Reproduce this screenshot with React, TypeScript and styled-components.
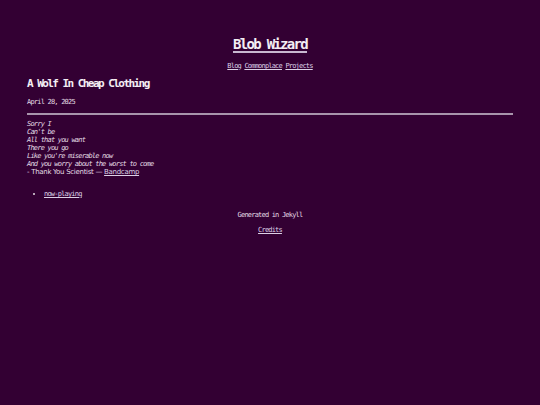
import React from "react";
import styled, { createGlobalStyle } from "styled-components";

const GlobalStyle = createGlobalStyle`
  html, body {
    margin: 0;
    padding: 0;
    background: #330033;
  }
  body {
    min-height: 405px;
    color: #e4dce4;
    font-family: "DejaVu Sans Mono", "Liberation Mono", monospace;
  }
`;

const lyrics = [
  "Sorry I",
  "Can't be",
  "All that you want",
  "There you go",
  "Like you're miserable now",
  "And you worry about the worst to come",
];

function App() {
  return (
    <>
      <GlobalStyle />
      <Page>
        <Header>
          <SiteTitle href="#">Blob Wizard</SiteTitle>
          <Nav>
            <SmallLink href="#">Blog</SmallLink> <SmallLink href="#">Commonplace</SmallLink>{" "}
            <SmallLink href="#">Projects</SmallLink>
          </Nav>
        </Header>

        <PostTitle>A Wolf In Cheap Clothing</PostTitle>
        <PostDate>April 28, 2025</PostDate>
        <Rule />

        <Quote>
          {lyrics.map((line) => (
            <Lyric key={line}>{line}</Lyric>
          ))}
          <Attribution>
            - Thank You Scientist — <SmallLink href="#">Bandcamp</SmallLink>
          </Attribution>
        </Quote>

        <Tags>
          <li>
            <SmallLink href="#">now-playing</SmallLink>
          </li>
        </Tags>

        <Footer>
          <FooterLine>Generated in Jekyll</FooterLine>
          <FooterLine>
            <SmallLink href="#">Credits</SmallLink>
          </FooterLine>
        </Footer>
      </Page>
    </>
  );
}

const Page = styled.div`
  padding: 34px 27px 0;
`;

const Header = styled.header`
  display: flex;
  flex-direction: column;
  align-items: center;
`;

const SiteTitle = styled.a`
  font-size: 14px;
  line-height: 20px;
  font-weight: bold;
  letter-spacing: -1.7px;
  color: #f4eef4;
  text-decoration: underline;
  text-decoration-color: #c8b8d0;
  text-decoration-thickness: 2px;
  text-underline-offset: 2px;
`;

const Small = styled.div`
  font-size: 7px;
  line-height: 8px;
  letter-spacing: -0.8px;
`;

const Nav = styled(Small)`
  margin-top: 7px;
  line-height: 10px;
`;

const SmallLink = styled.a`
  color: #dcd0e6;
  text-decoration: underline;
`;

const PostTitle = styled.h2`
  margin: 6px 0 0;
  font-size: 11px;
  line-height: 14px;
  font-weight: bold;
  letter-spacing: -1.55px;
  color: #f4eef4;
`;

const PostDate = styled(Small)`
  margin-top: 6px;
  line-height: 10px;
`;

const Rule = styled.hr`
  margin: 6px 0 0;
  border: none;
  height: 2px;
  background: #a894ac;
`;

const Quote = styled(Small)`
  margin-top: 5px;
`;

const Lyric = styled.div`
  font-style: italic;
`;

const Attribution = styled.div`
  font-family: "DejaVu Sans", "Liberation Sans", sans-serif;
  letter-spacing: -0.3px;
`;

const Tags = styled.ul`
  margin: 14px 0 0;
  padding-left: 17px;
  font-size: 7px;
  line-height: 8px;
  letter-spacing: -0.8px;
`;

const Footer = styled(Small)`
  margin-top: 13px;
  display: flex;
  flex-direction: column;
  align-items: center;
  gap: 7px;
`;

const FooterLine = styled.div``;

export default App;
